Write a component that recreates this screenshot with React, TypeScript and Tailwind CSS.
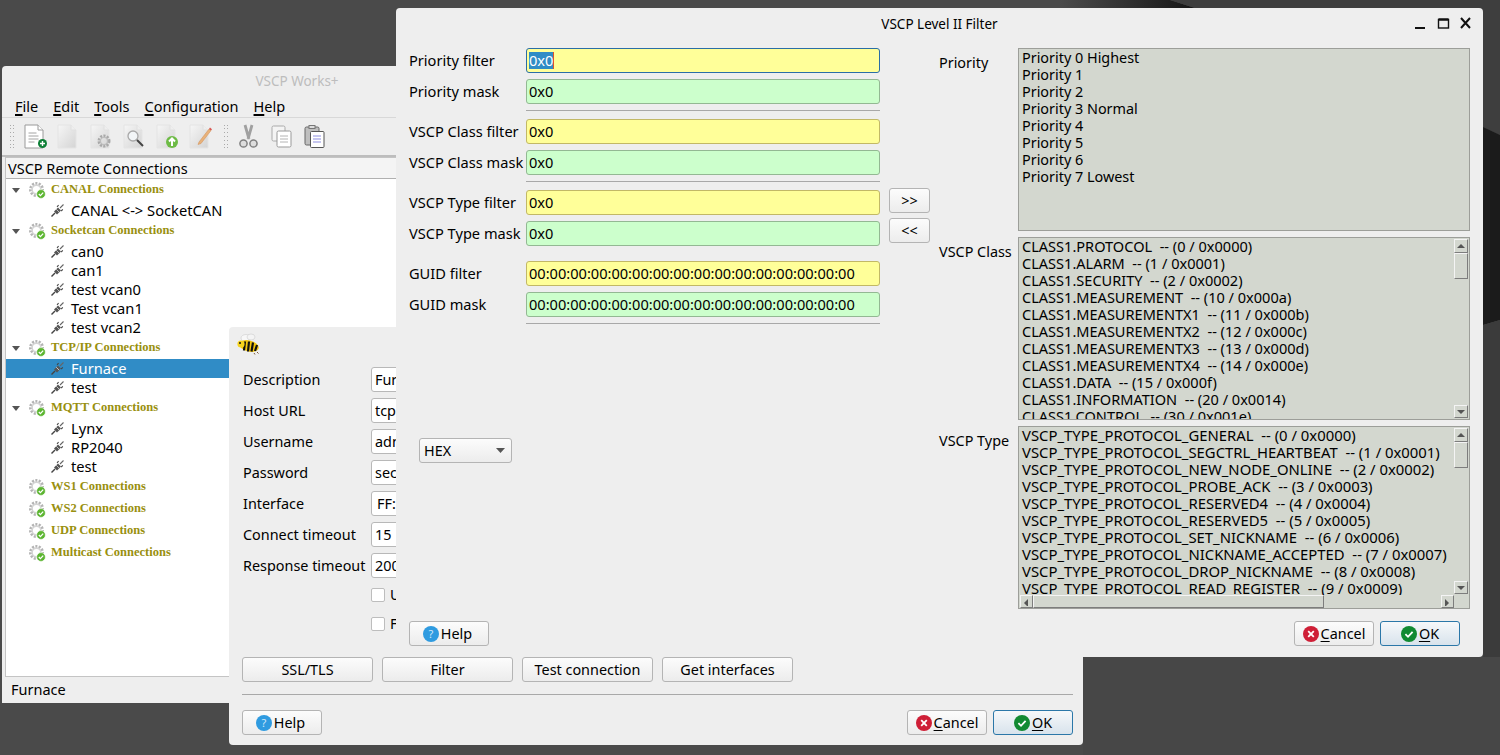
import React from "react";

const F = "font-['Noto_Sans',sans-serif]";

function Wallpaper() {
  return (
    <svg className="absolute inset-0" width="1500" height="755" viewBox="0 0 1500 755">
      <defs>
        <linearGradient id="st" x1="0" y1="0" x2="1" y2="0">
          <stop offset="0" stopColor="#4b4b4b" />
          <stop offset="1" stopColor="#161616" />
        </linearGradient>
      </defs>
      <rect width="1500" height="755" fill="#4a4a4a" />
      <rect x="1083" y="657" width="417" height="98" fill="#474747" />
      <polygon points="1060,0 1170,0 1195,8 1060,8" fill="url(#st)" />
      <polygon points="1170,0 1500,0 1500,135 1483,127 1195,8" fill="#3e3e3e" />
      <polygon points="1483,127 1500,135 1500,320 1483,325" fill="#1b1b1b" />
      <polygon points="1483,325 1500,320 1500,657 1483,657" fill="#3b3b3b" />
    </svg>
  );
}

function Gear() {
  return (
    <svg width="17" height="17" viewBox="0 0 17 17" className="shrink-0">
      <circle cx="7.5" cy="7.5" r="6" fill="none" stroke="#b4b4b4" strokeWidth="3" strokeDasharray="2 1.3" />
      <circle cx="7.5" cy="7.5" r="4.4" fill="none" stroke="#d4d4d4" strokeWidth="1.6" />
      <circle cx="12" cy="12" r="4.4" fill="#5cb531" stroke="#fff" strokeWidth="0.6" />
      <path d="M9.8 12l1.6 1.6 2.8-3" fill="none" stroke="#fff" strokeWidth="1.3" />
    </svg>
  );
}

function Plug() {
  return (
    <svg width="13" height="13" viewBox="0 0 13 13" className="shrink-0">
      <path d="M0.5 12.5L4 9" stroke="#444" strokeWidth="1.4" />
      <path d="M9 4L12.5 0.5" stroke="#666" strokeWidth="1.1" />
      <path d="M3 7.5l4-4 3 3-4 4z" fill="#555" />
      <path d="M5.2 5.2l3 3" stroke="#ccc" strokeWidth="0.9" />
      <path d="M6 2.8l1.6-1.6M10.2 7l1.6-1.6" stroke="#444" strokeWidth="1.1" />
    </svg>
  );
}

function Doc({ children, lines }: { children?: React.ReactNode; lines?: boolean }) {
  return (
    <svg width="24" height="25" viewBox="0 0 24 25" className="shrink-0">
      <defs>
        <linearGradient id="dg" x1="0" y1="0" x2="1" y2="1">
          <stop offset="0" stopColor="#f6f6f6" />
          <stop offset="1" stopColor="#d4d4d4" />
        </linearGradient>
      </defs>
      <path d="M1 1h13l5 5v18H1z" fill={lines ? "#ffffff" : "url(#dg)"} stroke={lines ? "#9a9a9a" : "#e4e4e4"} />
      <path d="M14 1v5h5" fill={lines ? "#fff" : "#eee"} stroke={lines ? "#9a9a9a" : "#e0e0e0"} />
      {lines && <path d="M4.5 9h8M4.5 12h10M4.5 15h10M4.5 18h6" stroke="#a4a4a4" strokeWidth="1" />}
      {children}
    </svg>
  );
}

function Grip() {
  return (
    <div className="w-[5px] h-[24px] shrink-0 grid grid-cols-2 gap-x-[1px] content-between">
      {[0, 1, 2, 3, 4, 5, 6, 7, 8, 9, 10, 11, 12, 13].map((i) => (
        <span key={i} className="w-[1px] h-[1px] bg-[#aaaaaa]" />
      ))}
    </div>
  );
}

function Toolbar() {
  return (
    <div className="h-[40px] border-t border-b-2 border-t-[#d8d8d8] border-b-[#bdbdbd] flex items-center pl-[8px]">
      <Grip />
      <div className="ml-[9px] flex gap-[9px] items-center">
        <Doc lines>
          <circle cx="18.5" cy="19.5" r="4.5" fill="#0d7f36" />
          <path d="M16 19.5h5M18.5 17v5" stroke="#fff" strokeWidth="1.4" />
        </Doc>
        <Doc />
        <Doc>
          <circle cx="14" cy="17" r="5" fill="none" stroke="#a8a8a8" strokeWidth="3" strokeDasharray="2 1.2" />
          <circle cx="14" cy="17" r="3.6" fill="none" stroke="#bdbdbd" strokeWidth="1.4" />
        </Doc>
        <Doc>
          <circle cx="10" cy="12" r="5" fill="#f2f5f7" stroke="#a8a8a8" strokeWidth="1.3" />
          <path d="M14 16l6 6" stroke="#444" strokeWidth="2" />
        </Doc>
        <Doc>
          <circle cx="16" cy="18" r="6" fill="#6dbb45" />
          <path d="M16 22v-7M13 17.5l3-3 3 3" stroke="#fff" strokeWidth="2" fill="none" />
        </Doc>
        <Doc>
          <path d="M10 18L20 5l2 1.6L12 19.5l-3 1z" fill="#e8b27a" stroke="#d08a50" strokeWidth="0.5" />
          <path d="M20 5l1-1.4 2 1.6-1 1.4z" fill="#d9534f" />
        </Doc>
      </div>
      <div className="ml-[11px]">
        <Grip />
      </div>
      <div className="ml-[9px] flex gap-[12px] items-center">
        <svg width="21" height="25" viewBox="0 0 21 25" className="shrink-0">
          <path d="M7 1l4 14M14 1l-4 14" stroke="#a0a0a0" strokeWidth="2.8" />
          <circle cx="5.5" cy="19.5" r="3.6" fill="#ddd" stroke="#808080" strokeWidth="1.5" />
          <circle cx="15.5" cy="19.5" r="3.6" fill="#ddd" stroke="#808080" strokeWidth="1.5" />
        </svg>
        <svg width="21" height="23" viewBox="0 0 21 23" className="shrink-0">
          <rect x="1" y="1" width="13" height="15" rx="1.5" fill="#f4f4f4" stroke="#aaa" />
          <rect x="6" y="6" width="14" height="16" rx="1.5" fill="#fff" stroke="#999" />
          <path d="M9 11h8M9 14h8M9 17h8" stroke="#b4b4b4" />
        </svg>
        <svg width="21" height="23" viewBox="0 0 21 23" className="shrink-0">
          <rect x="1" y="2" width="14" height="18" rx="1.5" fill="#bfbfbf" stroke="#666" />
          <rect x="5" y="0.5" width="6" height="3" fill="#ddd" stroke="#777" />
          <rect x="6.5" y="6.5" width="13.5" height="16" rx="1" fill="#fff" stroke="#555" />
          <path d="M9 11h8M9 14h8M9 17h8" stroke="#8d8de0" />
        </svg>
      </div>
    </div>
  );
}

const tree: { g: string; c: string[] }[] = [
  { g: "CANAL Connections", c: ["CANAL <-> SocketCAN"] },
  { g: "Socketcan Connections", c: ["can0", "can1", "test vcan0", "Test vcan1", "test vcan2"] },
  { g: "TCP/IP Connections", c: ["Furnace", "test"] },
  { g: "MQTT Connections", c: ["Lynx", "RP2040", "test"] },
  { g: "WS1 Connections", c: [] },
  { g: "WS2 Connections", c: [] },
  { g: "UDP Connections", c: [] },
  { g: "Multicast Connections", c: [] },
];

function MainWindow() {
  return (
    <div className="absolute left-[2px] top-[66px] w-[590px] h-[637px] bg-[#eeeeee] rounded-t-[4px] flex flex-col">
      <div className="h-[28px] pt-[2px] flex items-center justify-center text-[#bdbdbd] text-[13.5px]">VSCP Works+</div>
      <div className="h-[23px] flex items-center gap-[15px] pl-[13px] pt-[2px] text-[14.5px] text-black">
        {["File", "Edit", "Tools", "Configuration", "Help"].map((m) => (
          <span key={m}>
            <span className="underline underline-offset-2 decoration-[1.5px]">{m[0]}</span>
            {m.slice(1)}
          </span>
        ))}
      </div>
      <Toolbar />
      <div className="mx-[3px] flex-1 min-h-0 flex flex-col border border-[#c4c4c4] bg-white">
        <div className="h-[21px] shrink-0 bg-[#f4f4f4] border-b border-[#b0b0b0] pl-[2px] pt-[2px] flex items-center text-[14.5px] text-black">
          VSCP Remote Connections
        </div>
        <div className="flex-1 min-h-0 text-[14.7px] text-black">
          {tree.map((t) => (
            <div key={t.g}>
              <div className="h-[22px] flex items-center">
                <span className="w-[8px] ml-[6px] shrink-0">
                  {t.c.length > 0 && (
                    <svg width="8" height="5" viewBox="0 0 8 5" className="block">
                      <path d="M0 0h8L4 5z" fill="#555" />
                    </svg>
                  )}
                </span>
                <span className="ml-[9px] w-[22px] shrink-0">
                  <Gear />
                </span>
                <span className="font-['Liberation_Serif',serif] font-bold text-[12.5px] text-[#99900f] pb-[2px]">{t.g}</span>
              </div>
              {t.c.map((c) => {
                const sel = c === "Furnace";
                return (
                  <div key={c} className={`h-[19px] flex items-center pl-[45px] ${sel ? "bg-[#308cc6] text-white" : ""}`}>
                    <Plug />
                    <span className="ml-[7px]">{c}</span>
                  </div>
                );
              })}
            </div>
          ))}
        </div>
      </div>
      <div className="h-[26px] shrink-0 flex items-center pl-[9px] text-[14.5px] text-black">Furnace</div>
    </div>
  );
}

function HelpIcon() {
  return (
    <svg width="16" height="16" viewBox="0 0 16 16" className="shrink-0">
      <circle cx="8" cy="8" r="8" fill="#2f9be0" />
      <text x="8" y="12" textAnchor="middle" fontSize="11" fill="#cfe8fa" fontFamily="Noto Sans">?</text>
    </svg>
  );
}
function CancelIcon() {
  return (
    <svg width="16" height="16" viewBox="0 0 16 16" className="shrink-0">
      <circle cx="8" cy="8" r="8" fill="#cf1f37" />
      <path d="M5.2 5.2l5.6 5.6M10.8 5.2l-5.6 5.6" stroke="#fff" strokeWidth="1.8" />
    </svg>
  );
}
function OkIcon() {
  return (
    <svg width="16" height="16" viewBox="0 0 16 16" className="shrink-0">
      <circle cx="8" cy="8" r="8" fill="#118a32" />
      <path d="M4.4 8.2l2.6 2.6 4.6-5" fill="none" stroke="#fff" strokeWidth="1.8" />
    </svg>
  );
}

const btnBase =
  "h-[25px] flex items-center rounded-[3px] border border-[#b4b4b4] bg-linear-to-b from-[#fcfcfc] to-[#ececec] text-[14.4px] text-black";
const btn = `${btnBase} justify-center`;
const okBtn =
  "h-[25px] w-[80px] flex items-center justify-center gap-[2px] rounded-[3px] border border-[#2b77a8] bg-linear-to-b from-[#f6f8fa] to-[#d8e3ec] text-[14.4px] text-black";

function Actions() {
  return (
    <div className="flex gap-[6px]">
      <div className={`${btn} w-[80px] gap-[2px]`}>
        <CancelIcon />
        <span>
          <span className="underline underline-offset-2">C</span>ancel
        </span>
      </div>
      <div className={okBtn}>
        <OkIcon />
        <span>
          <span className="underline underline-offset-2">O</span>K
        </span>
      </div>
    </div>
  );
}

function HelpBtn() {
  return (
    <div className={`${btn} w-[80px] gap-[2px] pr-[3px]`}>
      <HelpIcon />
      <span>Help</span>
    </div>
  );
}

function Bee() {
  return (
    <svg width="24" height="22" viewBox="0 0 24 22">
      <ellipse cx="9" cy="5" rx="5" ry="3.5" fill="#f7f7f7" stroke="#ccc" strokeWidth="0.6" />
      <ellipse cx="14" cy="4" rx="4" ry="3" fill="#f4f4f4" stroke="#ccc" strokeWidth="0.6" />
      <ellipse cx="12" cy="13" rx="10" ry="5.5" fill="#f3c60e" transform="rotate(15 12 13)" />
      <path d="M8 8.5l-1 9M12 8.5l-1 10M16 9.5l-1.5 9M20 12l-2 6" stroke="#111" strokeWidth="2.2" />
      <circle cx="4" cy="11" r="3.6" fill="#f6d31c" />
      <circle cx="3" cy="10" r="1" fill="#111" />
      <path d="M17 20l1 1.5M20 19l1.5 1.5" stroke="#7a5a3a" strokeWidth="1" />
    </svg>
  );
}

const connRows: [string, string][] = [
  ["Description", "Furnace"],
  ["Host URL", "tcp://"],
  ["Username", "admin"],
  ["Password", "secret"],
  ["Interface", "FF:FF"],
  ["Connect timeout", "15"],
  ["Response timeout", "200"],
];

function ConnDialog() {
  return (
    <div className="absolute left-[229px] top-[327px] w-[854px] h-[418px] bg-[#eeeeee] rounded-[4px] flex flex-col pl-[13px] pr-[10px] text-[14.4px] text-black">
      <div className="h-[40px] -ml-[5px] pt-[6px] shrink-0">
        <Bee />
      </div>
      <div className="flex flex-col gap-[6px]">
        {connRows.map(([l, v]) => (
          <div key={l} className="flex items-center h-[25px]">
            <span className="w-[129px] shrink-0 pl-[1px]">{l}</span>
            <div
              className={`flex-1 h-[25px] bg-white border border-[#b8b8b8] rounded-[3px] flex items-center ${l === "Interface" ? "pl-[5px]" : "pl-[3px]"}`}
            >
              {v}
            </div>
          </div>
        ))}
      </div>
      <div className="ml-[129px] mt-[10px] flex flex-col gap-[15px]">
        {["Use TLS", "Full L2"].map((c) => (
          <div key={c} className="h-[14px] flex items-center gap-[5px]">
            <span className="w-[14px] h-[14px] bg-white border border-[#bdbdbd] rounded-[2px] shrink-0" />
            <span>{c}</span>
          </div>
        ))}
      </div>
      <div className="mt-[26px] flex gap-[9px]">
        {["SSL/TLS", "Filter", "Test connection", "Get interfaces"].map((b) => (
          <div key={b} className={`${btn} w-[131px]`}>
            {b}
          </div>
        ))}
      </div>
      <div className="mt-[12px] h-[1px] bg-[#a8a8a8]" />
      <div className="mt-[15px] flex justify-between">
        <HelpBtn />
        <Actions />
      </div>
    </div>
  );
}

function Field({ label, value, kind, focused }: { label: string; value: string; kind: "y" | "g"; focused?: boolean }) {
  const cls = focused
    ? "bg-[#ffff99] border-[#2a6ea6]"
    : kind === "y"
      ? "bg-[#ffff99] border-[#c2b866]"
      : "bg-[#ccffcc] border-[#93b893]";
  return (
    <div className="flex items-center h-[25px]">
      <span className="w-[117px] shrink-0 whitespace-nowrap">{label}</span>
      <div className={`flex-1 h-[25px] border rounded-[3px] flex items-center pl-[2px] ${cls}`}>
        {focused ? (
          <span className="bg-[#308cc6] text-white border-r border-r-[#e0522a] h-[17px] leading-[17px]">{value}</span>
        ) : (
          <span>{value}</span>
        )}
      </div>
    </div>
  );
}

const Sep = ({ cls }: { cls: string }) => <div className={`ml-[117px] h-[1px] bg-[#a8a8a8] ${cls}`} />;

function Arrow({ d }: { d: "u" | "d" | "l" | "r" }) {
  const p = { u: "M0 5L4 1l4 4z", d: "M0 1l8 0-4 4z", l: "M5 0v8L1 4z", r: "M1 0v8l4-4z" }[d];
  return (
    <svg width="8" height="8" viewBox="0 0 8 6" className="block">
      <path d={p} fill="#555" />
    </svg>
  );
}

const bevel = "border border-t-[#f4f4f4] border-l-[#f4f4f4] border-r-[#7d7d7d] border-b-[#7d7d7d] bg-[#d3d7cf]";

function VBar() {
  return (
    <div className="w-[15px] shrink-0 flex flex-col py-[1px] pr-[1px]">
      <div className={`h-[14px] shrink-0 flex items-center justify-center ${bevel}`}>
        <Arrow d="u" />
      </div>
      <div className={`h-[26px] shrink-0 ${bevel}`} />
      <div className="flex-1" />
      <div className={`h-[13px] shrink-0 flex items-center justify-center ${bevel}`}>
        <Arrow d="d" />
      </div>
    </div>
  );
}

function HBar() {
  return (
    <div className="h-[13px] shrink-0 flex pl-[1px]">
      <div className={`w-[13px] shrink-0 flex items-center justify-center ${bevel}`}>
        <Arrow d="l" />
      </div>
      <div className={`w-[291px] shrink-0 ${bevel}`} />
      <div className="flex-1" />
      <div className={`w-[13px] shrink-0 flex items-center justify-center ${bevel}`}>
        <Arrow d="r" />
      </div>
      <div className="w-[15px] shrink-0" />
    </div>
  );
}

function ListBox({
  label,
  items,
  size,
  v,
  h,
}: {
  label: string;
  items: string[];
  size: string;
  v?: boolean;
  h?: boolean;
}) {
  return (
    <div className="flex h-[183px]">
      <span className="w-[79px] shrink-0 pt-[4px] text-[14.4px]">{label}</span>
      <div className="flex-1 bg-[#d3d7cf] border border-[#9c9e99] flex flex-col min-w-0">
        <div className="flex-1 min-h-0 flex">
          <div className={`flex-1 min-w-0 overflow-hidden pl-[3px] ${size}`}>
            {items.map((i) => (
              <div key={i} className="h-[17px] leading-[17px] whitespace-pre">
                {i}
              </div>
            ))}
          </div>
          {v && <VBar />}
        </div>
        {h && <HBar />}
      </div>
    </div>
  );
}

const priorities = [
  "Priority 0 Highest",
  "Priority 1",
  "Priority 2",
  "Priority 3 Normal",
  "Priority 4",
  "Priority 5",
  "Priority 6",
  "Priority 7 Lowest",
];
const classes = [
  "CLASS1.PROTOCOL  -- (0 / 0x0000)",
  "CLASS1.ALARM  -- (1 / 0x0001)",
  "CLASS1.SECURITY  -- (2 / 0x0002)",
  "CLASS1.MEASUREMENT  -- (10 / 0x000a)",
  "CLASS1.MEASUREMENTX1  -- (11 / 0x000b)",
  "CLASS1.MEASUREMENTX2  -- (12 / 0x000c)",
  "CLASS1.MEASUREMENTX3  -- (13 / 0x000d)",
  "CLASS1.MEASUREMENTX4  -- (14 / 0x000e)",
  "CLASS1.DATA  -- (15 / 0x000f)",
  "CLASS1.INFORMATION  -- (20 / 0x0014)",
  "CLASS1.CONTROL  -- (30 / 0x001e)",
];
const types = [
  "VSCP_TYPE_PROTOCOL_GENERAL  -- (0 / 0x0000)",
  "VSCP_TYPE_PROTOCOL_SEGCTRL_HEARTBEAT  -- (1 / 0x0001)",
  "VSCP_TYPE_PROTOCOL_NEW_NODE_ONLINE  -- (2 / 0x0002)",
  "VSCP_TYPE_PROTOCOL_PROBE_ACK  -- (3 / 0x0003)",
  "VSCP_TYPE_PROTOCOL_RESERVED4  -- (4 / 0x0004)",
  "VSCP_TYPE_PROTOCOL_RESERVED5  -- (5 / 0x0005)",
  "VSCP_TYPE_PROTOCOL_SET_NICKNAME  -- (6 / 0x0006)",
  "VSCP_TYPE_PROTOCOL_NICKNAME_ACCEPTED  -- (7 / 0x0007)",
  "VSCP_TYPE_PROTOCOL_DROP_NICKNAME  -- (8 / 0x0008)",
  "VSCP_TYPE_PROTOCOL_READ_REGISTER  -- (9 / 0x0009)",
];

function FilterDialog() {
  const guid = "00:00:00:00:00:00:00:00:00:00:00:00:00:00:00:00";
  return (
    <div className="absolute left-[396px] top-[8px] w-[1087px] h-[649px] bg-[#eeeeee] rounded-[4px] text-[14.6px] text-black flex flex-col">
      <div className="h-[40px] shrink-0 relative flex justify-center pt-[6px] text-[13.5px]">
        <span>VSCP Level II Filter</span>
        <svg width="60" height="14" viewBox="0 0 60 14" className="absolute left-[1018px] top-[9px]">
          <path d="M1 11h10" stroke="#111" strokeWidth="2" />
          <rect x="24.5" y="2.5" width="10" height="8.5" fill="none" stroke="#111" strokeWidth="1.4" />
          <path d="M24.5 2.5h10" stroke="#111" strokeWidth="2.4" />
          <path d="M47 1l9 10M56 1l-9 10" stroke="#111" strokeWidth="2" />
        </svg>
      </div>
      <div className="flex pl-[13px] pr-[13px] h-[561px] shrink-0">
        <div className="w-[471px] shrink-0 flex flex-col">
          <Field label="Priority filter" value="0x0" kind="y" focused />
          <div className="mt-[6px]">
            <Field label="Priority mask" value="0x0" kind="g" />
          </div>
          <Sep cls="mt-[6px] mb-[8px]" />
          <Field label="VSCP Class filter" value="0x0" kind="y" />
          <div className="mt-[6px]">
            <Field label="VSCP Class mask" value="0x0" kind="g" />
          </div>
          <Sep cls="mt-[6px] mb-[8px]" />
          <Field label="VSCP Type filter" value="0x0" kind="y" />
          <div className="mt-[6px]">
            <Field label="VSCP Type mask" value="0x0" kind="g" />
          </div>
          <div className="mt-[15px]">
            <Field label="GUID filter" value={guid} kind="y" />
          </div>
          <div className="mt-[6px]">
            <Field label="GUID mask" value={guid} kind="g" />
          </div>
          <Sep cls="mt-[6px]" />
          <div className={`${btnBase} justify-between ml-[10px] mt-[114px] w-[93px] px-[4px]`}>
            <span>HEX</span>
            <svg width="9" height="5" viewBox="0 0 9 5" className="mr-[2px]">
              <path d="M0 0h9L4.5 5z" fill="#555" />
            </svg>
          </div>
        </div>
        <div className="ml-[9px] w-[41px] shrink-0 flex flex-col gap-[5px] pt-[140px]">
          <div className={`${btn} w-[41px]`}>&gt;&gt;</div>
          <div className={`${btn} w-[41px]`}>&lt;&lt;</div>
        </div>
        <div className="ml-[9px] w-[531px] shrink-0 flex flex-col gap-[6px]">
          <ListBox label="Priority" items={priorities} size="text-[14.4px]" />
          <ListBox label="VSCP Class" items={classes} size="text-[14.55px]" v />
          <ListBox label="VSCP Type" items={types} size="text-[14.85px]" v h />
        </div>
      </div>
      <div className="mt-[12px] flex justify-between pl-[13px] pr-[23px]">
        <HelpBtn />
        <Actions />
      </div>
    </div>
  );
}

export default function App() {
  return (
    <div className={`relative w-[1500px] h-[755px] overflow-hidden ${F}`}>
      <Wallpaper />
      <MainWindow />
      <ConnDialog />
      <FilterDialog />
    </div>
  );
}
